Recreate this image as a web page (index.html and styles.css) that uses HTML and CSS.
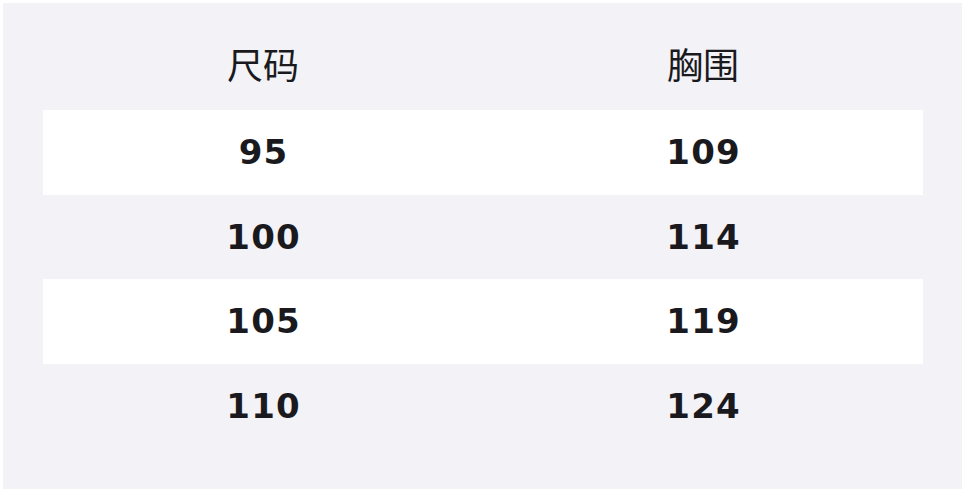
FILE: index.html
```html
<!DOCTYPE html>
<html lang="zh-CN">
<head>
<meta charset="utf-8">
<title>尺码表</title>
<link rel="stylesheet" href="styles.css">
</head>
<body>
<div class="panel">
  <div class="table">
    <div class="row head">
      <div class="cell">尺码</div>
      <div class="cell">胸围</div>
    </div>
    <div class="row odd">
      <div class="cell">95</div>
      <div class="cell">109</div>
    </div>
    <div class="row">
      <div class="cell">100</div>
      <div class="cell">114</div>
    </div>
    <div class="row odd">
      <div class="cell">105</div>
      <div class="cell">119</div>
    </div>
    <div class="row">
      <div class="cell">110</div>
      <div class="cell">124</div>
    </div>
  </div>
</div>
</body>
</html>
```

FILE: styles.css
```css
html, body {
  margin: 0;
  padding: 0;
  background: #ffffff;
}
body {
  padding: 3px 4px 4px 3px;
  width: 966px;
  height: 493px;
  box-sizing: border-box;
  overflow: hidden;
}
.panel {
  background: #f2f2f7;
  height: 486px;
  box-sizing: border-box;
  padding: 0 39px 41px 40px;
}
.table {
  display: flex;
  flex-direction: column;
}
.row {
  display: grid;
  grid-template-columns: 1fr 1fr;
  height: 84.5px;
  align-items: center;
  font-family: "DejaVu Sans", sans-serif;
  font-weight: bold;
  font-size: 34px;
  letter-spacing: 1.2px;
  color: #1a1a1e;
}
.row.odd {
  background: #ffffff;
}
.row.head {
  height: 107px;
  align-items: start;
  padding-top: 36px;
  box-sizing: border-box;
  font-family: "Noto Sans CJK SC", "Noto Sans", sans-serif;
  font-weight: normal;
  font-size: 36px;
  letter-spacing: 0;
  line-height: 48px;
}
.cell {
  text-align: center;
  line-height: 48px;
  padding-left: 1.2px;
}
.row.head .cell {
  padding-left: 0;
}
```
